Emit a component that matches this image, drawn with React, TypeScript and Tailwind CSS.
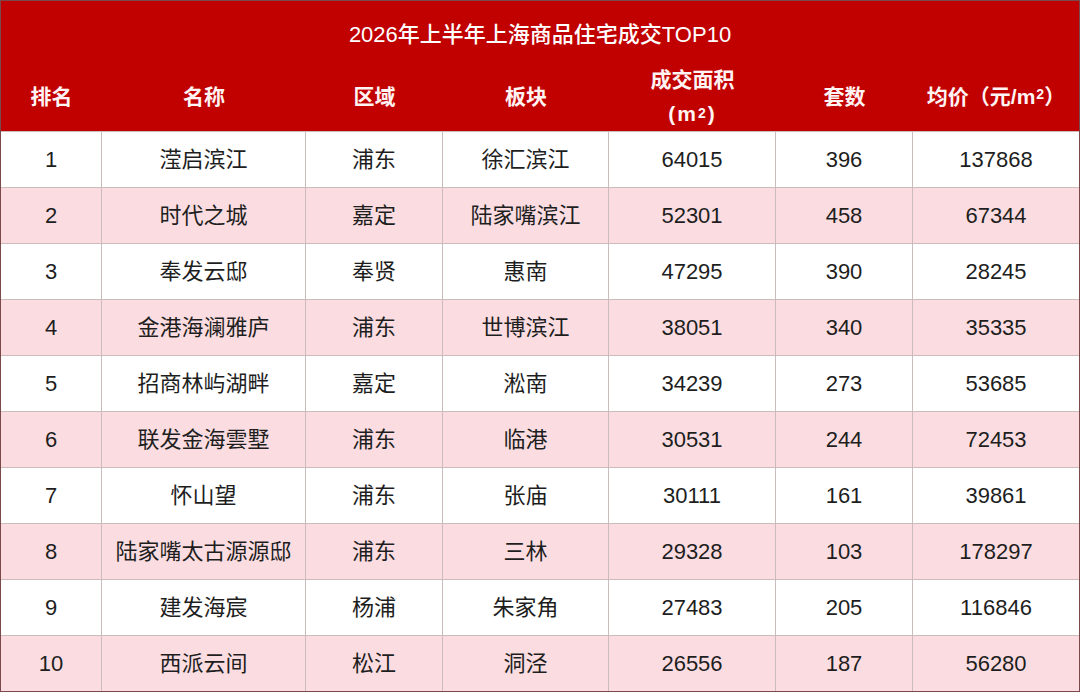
import React from "react";

const rows = [
  ["1", "滢启滨江", "浦东", "徐汇滨江", "64015", "396", "137868"],
  ["2", "时代之城", "嘉定", "陆家嘴滨江", "52301", "458", "67344"],
  ["3", "奉发云邸", "奉贤", "惠南", "47295", "390", "28245"],
  ["4", "金港海澜雅庐", "浦东", "世博滨江", "38051", "340", "35335"],
  ["5", "招商林屿湖畔", "嘉定", "淞南", "34239", "273", "53685"],
  ["6", "联发金海雲墅", "浦东", "临港", "30531", "244", "72453"],
  ["7", "怀山望", "浦东", "张庙", "30111", "161", "39861"],
  ["8", "陆家嘴太古源源邸", "浦东", "三林", "29328", "103", "178297"],
  ["9", "建发海宸", "杨浦", "朱家角", "27483", "205", "116846"],
  ["10", "西派云间", "松江", "洞泾", "26556", "187", "56280"],
];

const font = { fontFamily: '"Liberation Sans", "Noto Sans CJK SC", sans-serif' };

const cols = "grid grid-cols-[101px_204px_137px_166px_167px_137px_166px]";

export default function App() {
  return (
    <div className="w-[1080px] h-[692px] overflow-hidden border border-[#7a4a4a] bg-white text-[#1e1e1e]" style={font}>
      {/* Title + header band */}
      <div className="bg-[#c10000] h-[130px] flex flex-col">
        <div className="h-[65px] flex items-center justify-center text-[22px] font-medium text-white pt-1">
          2026年上半年上海商品住宅成交TOP10
        </div>
        <div className={`${cols} flex-1 text-[21px] font-bold text-[#fff3f3]`}>
          <div className="flex items-center justify-center">排名</div>
          <div className="flex items-center justify-center">名称</div>
          <div className="flex items-center justify-center">区域</div>
          <div className="flex items-center justify-center">板块</div>
          <div className="flex flex-col items-center justify-center leading-[34px]">
            <span>成交面积</span>
            <span className="tracking-[2px]">
              (m<sup className="text-[14px] relative -top-[3px]">2</sup>)
            </span>
          </div>
          <div className="flex items-center justify-center">套数</div>
          <div className="flex items-center justify-center">
            均价（元/m<sup className="text-[14px] relative -top-[3px] ml-[1px]">2</sup>）
          </div>
        </div>
      </div>

      {/* Body rows */}
      <div className="flex flex-col">
        {rows.map((r, i) => (
          <div
            key={r[0]}
            className={`${cols} h-[56px] border-t border-[#cbbcbc] text-[22px] ${
              i % 2 === 1 ? "bg-[#fbdde1]" : "bg-white"
            }`}
          >
            {r.map((c, j) => (
              <div
                key={j}
                className={`flex items-center justify-center ${j < 6 ? "border-r border-[#cbbcbc]" : ""}`}
              >
                {c}
              </div>
            ))}
          </div>
        ))}
      </div>
    </div>
  );
}
